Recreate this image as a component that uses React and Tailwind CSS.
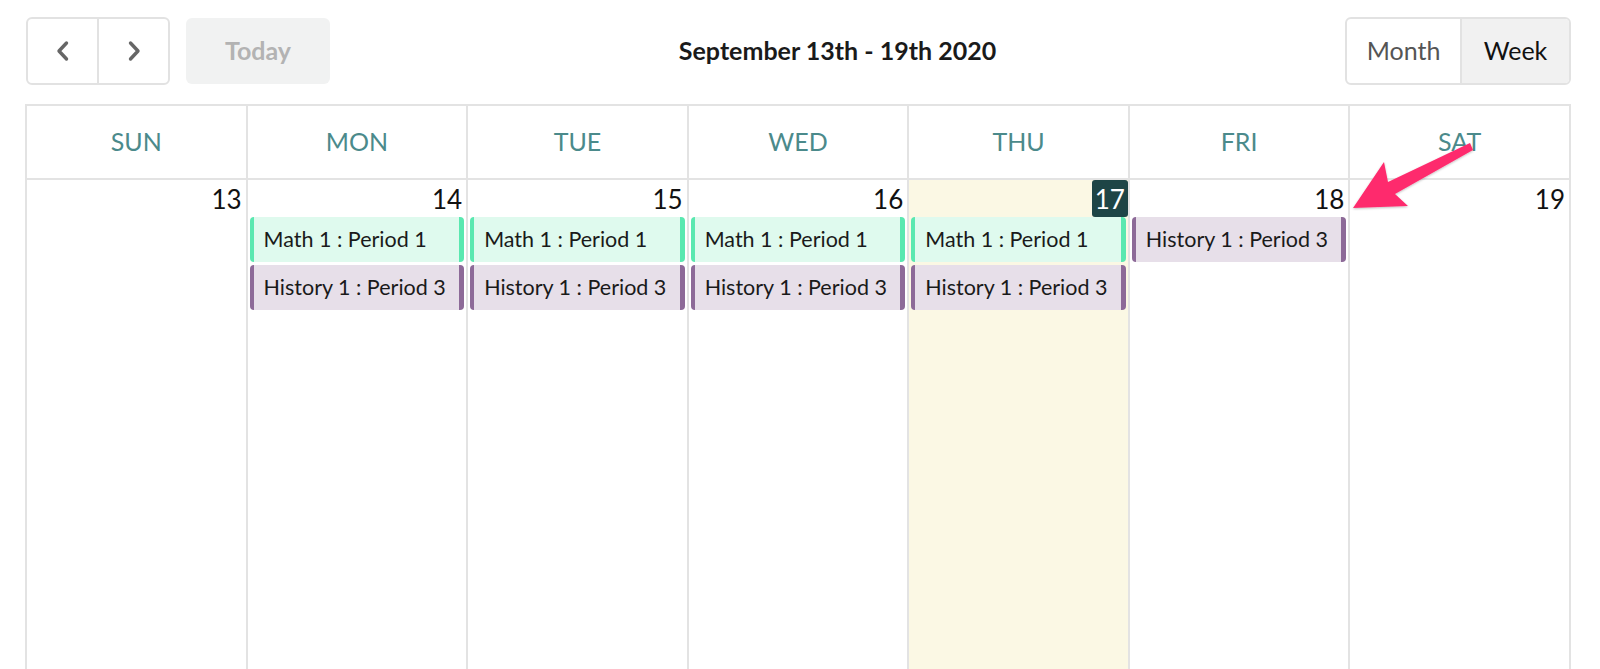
import React from 'react'

const days = [
  { name: 'SUN', num: 13, events: [] },
  { name: 'MON', num: 14, events: ['math', 'history'] },
  { name: 'TUE', num: 15, events: ['math', 'history'] },
  { name: 'WED', num: 16, events: ['math', 'history'] },
  { name: 'THU', num: 17, events: ['math', 'history'], today: true },
  { name: 'FRI', num: 18, events: ['history'] },
  { name: 'SAT', num: 19, events: [] },
]

const eventStyles = {
  math: {
    label: 'Math 1 : Period 1',
    cls: 'bg-[#dffaee] border-[#5ae8b0]',
  },
  history: {
    label: 'History 1 : Period 3',
    cls: 'bg-[#e7dfe9] border-[#8d6a98]',
  },
}

function Chevron({ dir }) {
  return (
    <svg width="18" height="24" viewBox="0 0 18 24" fill="none">
      <path
        d={dir === 'left' ? 'M12.5 4 L5 12 L12.5 20' : 'M5.5 4 L13 12 L5.5 20'}
        stroke="#666"
        strokeWidth="3.4"
        strokeLinecap="round"
        strokeLinejoin="round"
      />
    </svg>
  )
}

export default function App() {
  return (
    <div className="relative h-[669px] overflow-hidden bg-white pl-[25px] pr-[29px] pt-[17px] font-['Lato','Noto_Sans',sans-serif]">
      {/* Toolbar */}
      <div className="flex items-center h-[68px]">
        <div className="flex h-[68px] w-[144px] ml-[1px] rounded-[6px] border-2 border-[#e2e2e2]">
          <button className="flex-1 flex items-center justify-center border-r-2 border-[#e2e2e2]">
            <Chevron dir="left" />
          </button>
          <button className="flex-1 flex items-center justify-center">
            <Chevron dir="right" />
          </button>
        </div>
        <button className="ml-[16px] h-[66px] w-[144px] rounded-[6px] bg-[#f1f2f2] text-[25px] font-bold text-[#b3b3b3]">
          Today
        </button>
        <div className="flex-1 text-center text-[25px] font-bold text-[#1a1a1a]">
          September 13th - 19th 2020
        </div>
        <div className="flex h-[68px] w-[226px] rounded-[6px] border-2 border-[#e2e2e2] overflow-hidden text-[25px]">
          <button className="w-[115px] border-r-2 border-[#e2e2e2] text-[#555]">Month</button>
          <button className="flex-1 bg-[#f1f1f1] text-[#111]">Week</button>
        </div>
      </div>

      {/* Calendar */}
      <div className="mt-[19px] grid grid-cols-7 border-r-2 border-t-2 border-[#e3e3e3]">
        {days.map((d) => (
          <div
            key={d.name}
            className="h-[74px] flex items-center justify-center border-l-2 border-b-2 border-[#e3e3e3] text-[25px] text-[#4b8a8b]"
          >
            {d.name}
          </div>
        ))}
        {days.map((d) => (
          <div
            key={d.num}
            className={`h-[500px] border-l-2 border-[#e3e3e3] ${d.today ? 'bg-[#fbf8e4]' : ''}`}
          >
            <div className="flex justify-end h-[37px]">
              {d.today ? (
                <span className="flex items-center justify-center w-[36px] h-[37px] rounded-[3px] bg-[#1e4546] text-white text-[26px] leading-none">
                  {d.num}
                </span>
              ) : (
                <span className="pr-[4px] pt-[6px] text-[26px] leading-none text-[#111]">{d.num}</span>
              )}
            </div>
            <div className="flex flex-col gap-[3px] px-[2px]">
              {d.events.map((e) => (
                <div
                  key={e}
                  className={`h-[45px] flex items-center rounded-[4px] border-l-[4px] border-r-[5px] pl-[10px] text-[21.5px] text-[#1a1a1a] whitespace-nowrap overflow-hidden ${eventStyles[e].cls}`}
                >
                  {eventStyles[e].label}
                </div>
              ))}
            </div>
          </div>
        ))}
      </div>

      {/* Annotation arrow */}
      <svg className="absolute left-0 top-0 pointer-events-none" width="1600" height="669">
        <defs>
          <filter id="sh" x="-20%" y="-20%" width="140%" height="140%">
            <feDropShadow dx="0" dy="1" stdDeviation="1.2" floodColor="#000" floodOpacity="0.25" />
          </filter>
        </defs>
        <polygon
          points="1353,208 1408,206 1395,194 1473,150 1470,143 1388,182 1384,162"
          fill="#fe2c6d"
          filter="url(#sh)"
          strokeLinejoin="round"
        />
      </svg>
    </div>
  )
}
